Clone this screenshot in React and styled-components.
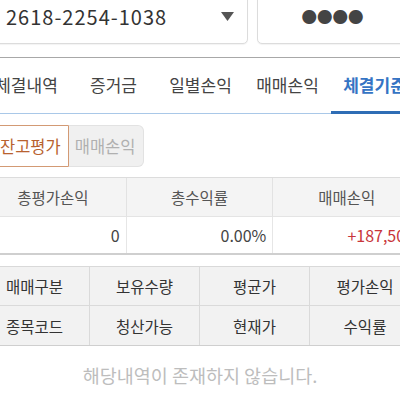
import React from "react";
import styled, { createGlobalStyle } from "styled-components";

const Global = createGlobalStyle`
  html, body { margin: 0; padding: 0; background: #fff; overflow: hidden; }
  body { font-family: "Noto Sans CJK KR", "Noto Sans", sans-serif; }
  * { box-sizing: border-box; }
`;

const Page = styled.div`
  width: 440px;
  margin-left: -20px;
  background: #fff;
  color: #333;
`;

const Header = styled.div`
  display: flex;
  gap: 9px;
  padding: 0 12px;
  margin-top: -12px;
  margin-bottom: 13px;
`;

const Field = styled.div`
  height: 56px;
  border: 1px solid #dcdcdc;
  border-radius: 5px;
  box-shadow: 0 1px 1px rgba(0, 0, 0, 0.05);
  display: flex;
  align-items: center;
  background: #fff;
`;

const AccountSelect = styled(Field)`
  flex: 0 0 256px;
  justify-content: space-between;
  padding: 0 13px;
  font-size: 20px;
  letter-spacing: 1px;
  color: #333;
`;

const PasswordBox = styled(Field)`
  flex: 1;
  justify-content: center;
  font-size: 15.5px;
  color: #444;
  letter-spacing: 0;
`;

const TabBar = styled.div`
  display: flex;
  height: 57px;
  padding-left: 3px;
  border-top: 1px solid #a8a8a8;
  border-bottom: 1px solid #a9c8e8;
`;

const Tab = styled.div`
  flex: 0 0 87px;
  display: flex;
  align-items: center;
  justify-content: center;
  font-size: 17px;
  white-space: nowrap;
  color: ${(p) => (p.$active ? "#3574c4" : "#444")};
  font-weight: ${(p) => (p.$active ? 700 : 400)};
  border-bottom: 3px solid ${(p) => (p.$active ? "#2f6db5" : "transparent")};
  margin-bottom: -1px;
`;

const ToggleGroup = styled.div`
  display: flex;
  padding: 11px 12px 0;
`;

const Toggle = styled.div`
  height: 42px;
  padding: 0 7px;
  display: flex;
  align-items: center;
  font-size: 16.5px;
  ${(p) =>
    p.$on
      ? `
    background: #fff;
    color: #b8622f;
    border: 1px solid #d39a74;
    border-radius: 4px 0 0 4px;
  `
      : `
    background: #f0f0f0;
    color: #b0b0b0;
    border: 1px solid #e2e2e2;
    border-left: none;
    border-radius: 0 6px 6px 0;
    padding: 0 8px 0 6px;
  `}
`;

const Summary = styled.div`
  margin-top: 10px;
  display: grid;
  grid-template-columns: repeat(3, 1fr);
  border-top: 1px solid #dcdcdc;
  border-bottom: 2px solid #cfcfcf;
`;

const HeadCell = styled.div`
  height: 39px;
  background: #f4f4f4;
  display: flex;
  align-items: center;
  justify-content: center;
  font-size: 15.5px;
  color: #555;
  border-bottom: 1px solid #e4e4e4;
  border-right: 1px solid #e2e2e2;
  &:nth-child(3n) { border-right: none; }
`;

const ValueCell = styled.div`
  height: 36px;
  display: flex;
  align-items: center;
  justify-content: flex-end;
  padding-right: 6px;
  font-size: 16px;
  white-space: nowrap;
  color: ${(p) => (p.$red ? "#c8353a" : "#444")};
  border-right: 1px solid #e6e6e6;
  &:nth-child(3n) { border-right: none; }
`;

const InfoGrid = styled.div`
  margin-top: 11px;
  display: grid;
  grid-template-columns: repeat(4, 1fr);
  background: #f2f2f2;
  border-top: 1px solid #d9d9d9;
  border-bottom: 1px solid #cfcfcf;
`;

const InfoCell = styled.div`
  height: 39px;
  display: flex;
  align-items: center;
  justify-content: center;
  font-size: 15.5px;
  color: #333;
  border-right: 1px solid #dadada;
  &:nth-child(4n) { border-right: none; }
  &:nth-child(-n + 4) { border-bottom: 1px solid #dadada; }
`;

const Empty = styled.div`
  padding-top: 17px;
  text-align: center;
  font-size: 18.5px;
  line-height: 24px;
  color: #bdbdbd;
`;

const Caret = () => (
  <svg width="13" height="9" viewBox="0 0 13 9">
    <path d="M0 0 L13 0 L6.5 9 Z" fill="#555" />
  </svg>
);

const tabs = ["체결내역", "증거금", "일별손익", "매매손익", "체결기준"];
const info = ["매매구분", "보유수량", "평균가", "평가손익", "종목코드", "청산가능", "현재가", "수익률"];

export default function App() {
  return (
    <Page>
      <Global />
      <Header>
        <AccountSelect>
          <span>2618-2254-1038</span>
          <Caret />
        </AccountSelect>
        <PasswordBox>●●●●</PasswordBox>
      </Header>
      <TabBar>
        {tabs.map((t, i) => (
          <Tab key={t} $active={i === 4}>
            {t}
          </Tab>
        ))}
      </TabBar>
      <ToggleGroup>
        <Toggle $on>잔고평가</Toggle>
        <Toggle>매매손익</Toggle>
      </ToggleGroup>
      <Summary>
        <HeadCell>총평가손익</HeadCell>
        <HeadCell>총수익률</HeadCell>
        <HeadCell>매매손익</HeadCell>
        <ValueCell>0</ValueCell>
        <ValueCell>0.00%</ValueCell>
        <ValueCell $red>+187,500</ValueCell>
      </Summary>
      <InfoGrid>
        {info.map((t) => (
          <InfoCell key={t}>{t}</InfoCell>
        ))}
      </InfoGrid>
      <Empty>해당내역이 존재하지 않습니다.</Empty>
    </Page>
  );
}
